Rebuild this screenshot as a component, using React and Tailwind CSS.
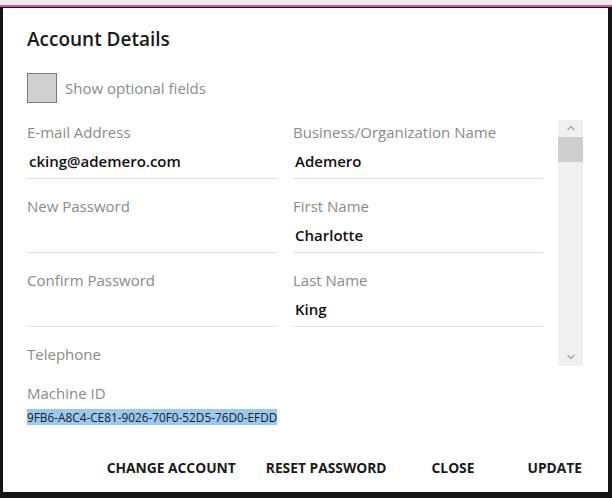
import React from "react";

const fields = [
  [
    { label: "E-mail Address", value: "cking@ademero.com" },
    { label: "New Password", value: "" },
    { label: "Confirm Password", value: "" },
    { label: "Telephone", value: "" },
  ],
  [
    { label: "Business/Organization Name", value: "Ademero" },
    { label: "First Name", value: "Charlotte" },
    { label: "Last Name", value: "King" },
  ],
];

const Field = ({ label, value }) => (
  <div className="h-[74px] shrink-0 flex flex-col">
    <div className="text-[15px] leading-[22px] text-[#8a8a8a] mt-[1px]">{label}</div>
    <div className="h-[36px] border-b border-[#e0e0e0] pl-[2px] pt-[7px] text-[15px] leading-[22px] font-semibold text-[#111]">
      {value}
    </div>
  </div>
);

const App = () => {
  return (
    <div
      className="w-[612px] h-[498px] bg-[#141414] overflow-hidden flex flex-col"
      style={{ fontFamily: '"Open Sans", "Noto Sans", sans-serif' }}
    >
      {/* page behind the dialog */}
      <div className="h-[7px] bg-[#ececec] shrink-0 border-b-2 border-[#e0509f]" />
      <div className="flex-1 flex pt-[1px]">
        <div className="ml-[3px] w-[605px] h-[484px] bg-white flex flex-col">
          <h2 className="pl-[24px] pt-[19px] text-[19px] leading-[24px] font-semibold text-[#1a1a1a]">
            Account Details
          </h2>

          <label className="flex items-center gap-[8px] pl-[24px] mt-[22px]">
            <span className="w-[30px] h-[30px] bg-[#d0d0d0] border border-[#7a7a7a]" />
            <span className="text-[15px] text-[#8a8a8a]">Show optional fields</span>
          </label>

          {/* scrolling fields */}
          <div className="mt-[17px] h-[247px] flex overflow-hidden">
            <div className="pl-[24px] flex gap-[16px]">
              {fields.map((col, i) => (
                <div key={i} className="w-[250px] flex flex-col">
                  {col.map((f) => (
                    <Field key={f.label} {...f} />
                  ))}
                </div>
              ))}
            </div>
            <div className="ml-[15px] w-[25px] h-[246px] bg-[#f0f0f0] flex flex-col items-center">
              <svg width="10" height="17" viewBox="0 0 10 17" className="shrink-0">
                <path d="M1.5 10 L5 6.5 L8.5 10" fill="none" stroke="#a0a0a0" strokeWidth="1.2" />
              </svg>
              <div className="w-full h-[25px] bg-[#cdcdcd]" />
              <div className="flex-1" />
              <svg width="10" height="17" viewBox="0 0 10 17" className="shrink-0">
                <path d="M1.5 6 L5 9.5 L8.5 6" fill="none" stroke="#a0a0a0" strokeWidth="1.2" />
              </svg>
            </div>
          </div>

          <div className="pl-[24px] mt-[15px]">
            <div className="text-[15px] leading-[22px] text-[#8a8a8a]">Machine ID</div>
            <div className="mt-[1px] inline-block bg-[#99c9ef] text-[11.8px] leading-[16px] text-[#1a1a1a]">
              9FB6-A8C4-CE81-9026-70F0-52D5-76D0-EFDD
            </div>
          </div>

          <div className="mt-auto mb-[13px] flex justify-end items-center pr-[26px] text-[13.8px] font-bold text-[#1a1a1a]">
            <button>CHANGE ACCOUNT</button>
            <button className="ml-[30px]">RESET PASSWORD</button>
            <button className="ml-[45px]">CLOSE</button>
            <button className="ml-[53px]">UPDATE</button>
          </div>
        </div>
      </div>
    </div>
  );
};

export default App;
